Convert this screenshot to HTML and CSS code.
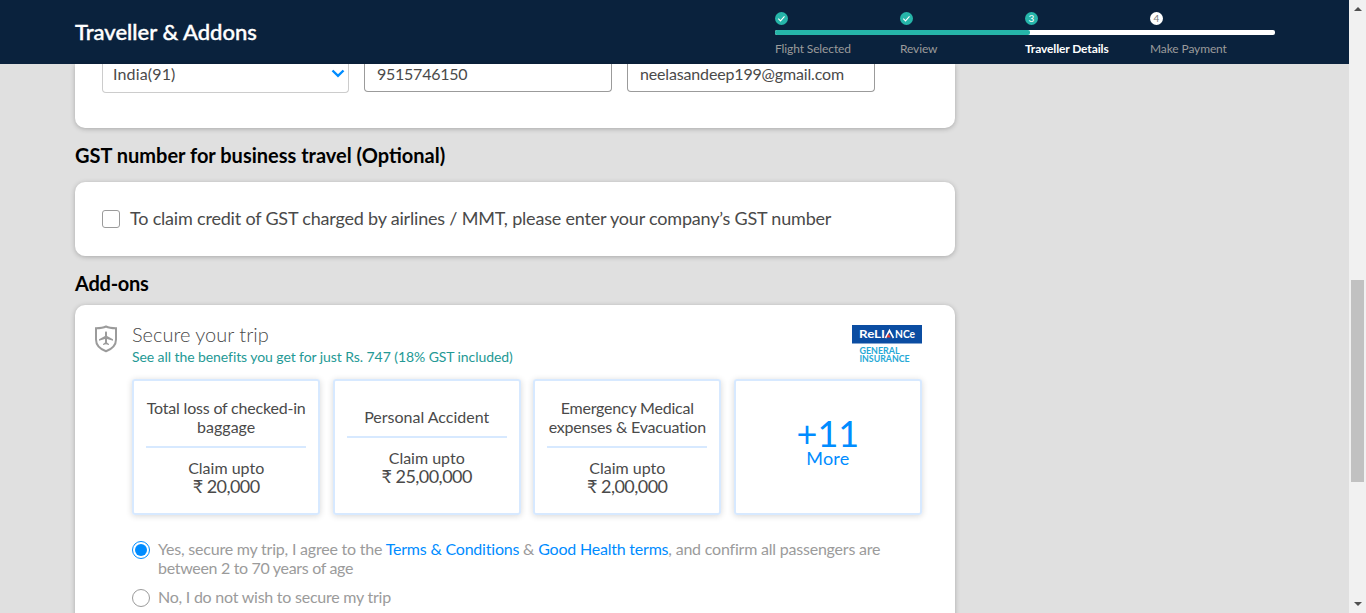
FILE: index.html
```html
<!DOCTYPE html>
<html lang="en">
<head>
<meta charset="utf-8">
<title>Traveller &amp; Addons</title>
<link rel="stylesheet" href="styles.css">
</head>
<body>
<div class="page">
  <header class="header">
    <h1 class="title"><span>Traveller &amp; Addons</span></h1>
    <div class="progress">
      <div class="dots">
        <span class="dot"><svg width="13" height="13" viewBox="0 0 13 13"><path d="M3.3 6.7l2.2 2.2 4-4.5"/></svg></span>
        <span class="dot"><svg width="13" height="13" viewBox="0 0 13 13"><path d="M3.3 6.7l2.2 2.2 4-4.5"/></svg></span>
        <span class="dot">3</span>
        <span class="dot pending">4</span>
      </div>
      <div class="track"><div class="fill"></div></div>
      <div class="steps"><span>Flight Selected</span><span>Review</span><span class="current">Traveller Details</span><span>Make Payment</span></div>
    </div>
  </header>
  <main class="content">
    <section class="card contact">
      <div class="field select"><span class="country">India(91)</span><svg width="14" height="9" viewBox="0 0 14 9"><path d="M1.5 1.5L7 6.8l5.5-5.3"/></svg></div>
      <div class="field"><span class="phone">9515746150</span></div>
      <div class="field"><span class="email">neelasandeep199@gmail.com</span></div>
    </section>
    <h2 class="heading gst-heading"><span>GST number for business travel (Optional)</span></h2>
    <section class="card gst"><span class="checkbox"></span><span class="gst-text">To claim credit of GST charged by airlines / MMT, please enter your company’s GST number</span></section>
    <h2 class="heading addon-heading"><span>Add-ons</span></h2>
    <section class="card addons">
      <div class="secure">
        <svg class="shield" width="24" height="28" viewBox="0 0 24 28"><path class="outline" d="M12 1.500C9 3 5.500 3.200 2 3.200V14.500C2 20.500 6 24 12 26.300 18 24 22 20.500 22 14.500V3.200C18.500 3.200 15 3 12 1.500Z"/><path class="plane" d="M11 7.500Q12 5.200 13 7.500V11L19 14.200V15.800L13 14V17.500L15 19V20L12 19.300 9 20V19L11 17.500V14L5 15.800V14.200L11 11Z"/></svg>
        <div class="secure-copy"><div class="secure-title"><span>Secure your trip</span></div><div class="benefits"><span>See all the benefits you get for just Rs. 747 (18% GST included)</span></div></div>
        <svg class="logo" width="70" height="38" viewBox="0 0 70 38"><rect width="70" height="18.500" fill="#0b4da2"/><g class="brand"><text x="7" y="13" textLength="26" lengthAdjust="spacingAndGlyphs">ReLI</text><path d="M33.500 13L37.500 5.500 41.500 13"/><text x="43" y="13" textLength="20" lengthAdjust="spacingAndGlyphs">NCe</text></g><path d="M34.500 12.500l2-4 2.200 4z" fill="#ed3b32"/><g class="brand-sub"><text x="7.500" y="28.500" textLength="40" lengthAdjust="spacingAndGlyphs">GENERAL</text><text x="7.500" y="37.300" textLength="50" lengthAdjust="spacingAndGlyphs">INSURANCE</text></g></svg>
      </div>
      <div class="benefit-grid">
        <div class="benefit"><div class="name"><span class="tight">Total loss of checked-in</span><br><span>baggage</span></div><div class="claim">Claim upto</div><div class="amount">₹ 20,000</div></div>
        <div class="benefit"><div class="name"><span>Personal Accident</span></div><div class="claim">Claim upto</div><div class="amount">₹ 25,00,000</div></div>
        <div class="benefit"><div class="name"><span class="tight">Emergency Medical</span><br><span class="tight">expenses &amp; Evacuation</span></div><div class="claim">Claim upto</div><div class="amount">₹ 2,00,000</div></div>
        <div class="benefit more"><div class="count">+11</div><div class="more-label">More</div></div>
      </div>
      <div class="choice"><span class="radio selected"></span><p><span class="terms">Yes, secure my trip, I agree to the <a>Terms &amp; Conditions</a> &amp; <a>Good Health terms</a>, and confirm all passengers are</span><br><span class="years">between 2 to 70 years of age</span></p></div>
      <div class="choice"><span class="radio"></span><p><span class="no">No, I do not wish to secure my trip</span></p></div>
    </section>
  </main>
</div>
<aside class="scrollbar"><span class="arrow up"></span><span class="thumb"></span><span class="arrow down"></span></aside>
</body>
</html>
```
FILE: styles.css
```css
* { box-sizing: border-box; }
body { margin: 0; width: 1366px; height: 613px; overflow: hidden; display: flex; background: #e0e0e0; font-family: Lato, sans-serif; color: #4a4a4a; white-space: nowrap; }
.page { width: 1349px; height: 613px; overflow: hidden; }
.header { height: 64px; background: #0a223d; padding: 0 74px 0 75px; display: flex; justify-content: space-between; }
.title { margin: 0; color: #fff; font-size: 22px; font-weight: 500; line-height: 64px; -webkit-text-stroke: .4px #fff; }
.progress { width: 500px; padding-top: 12px; }
.dots, .steps { display: grid; grid-template-columns: repeat(4, 125px); }
.dot { width: 13px; height: 13px; border-radius: 50%; background: #26b5a9; color: #fff; font-size: 10px; line-height: 13px; text-align: center; }
.dot svg { display: block; fill: none; stroke: #fff; stroke-width: 1.1; }
.dot.pending { background: #fff; color: #777; }
.track { height: 5px; margin-top: 5px; background: #fff; border-radius: 2px; overflow: hidden; }
.fill { width: 255px; height: 5px; background: #26b5a9; border-radius: 0 2px 2px 0; }
.steps { margin-top: 6px; font-size: 12px; line-height: 16px; letter-spacing: -.12px; color: #9b9b9b; }
.current { color: #fff; font-weight: 700; }
.content { padding-left: 75px; width: 955px; }
.card { background: #fff; border-radius: 10px; box-shadow: 0 1px 5px rgba(0,0,0,.25); }
.contact { height: 64px; border-radius: 0 0 10px 10px; padding-left: 27px; display: flex; gap: 15px; align-items: flex-start; }
.field { width: 248px; height: 28px; border: 1px solid #9b9b9b; border-top: 0; border-radius: 0 0 4px 4px; padding: 0 12px; font-size: 16px; line-height: 20px; }
.email { letter-spacing: -.16px; }
.phone { letter-spacing: -.25px; }
.country { letter-spacing: .15px; }
.select { width: 247px; height: 29px; border-color: #ccc; padding: 0 3px 0 10px; display: flex; justify-content: space-between; }
.select svg { margin-top: 5px; fill: none; stroke: #008cff; stroke-width: 2.4; }
.heading { margin: 0; color: #000; font-size: 20px; font-weight: 700; }
.gst-heading { height: 54px; line-height: 54px; }
.gst { height: 74px; padding-left: 27px; display: flex; align-items: center; gap: 10px; font-size: 18px; }
.gst-text { letter-spacing: -.195px; padding-bottom: 2px; }
.checkbox { width: 18px; height: 18px; border: 1px solid #9b9b9b; border-radius: 3px; }
.addon-heading { height: 49px; line-height: 54px; letter-spacing: -.25px; }
.addons { height: 340px; padding: 19px 33px 0 19px; }
.secure { height: 55px; display: flex; }
.shield { margin-top: 1px; }
.shield .outline { fill: none; stroke: #9b9b9b; stroke-width: 2; }
.shield .plane { fill: #9b9b9b; }
.secure-copy { margin-left: 14px; flex: 1; }
.secure-title { font-size: 20px; font-weight: 300; line-height: 21px; }
.benefits { font-size: 14px; line-height: 24px; letter-spacing: -.075px; color: #249995; }
.logo { margin-top: 1px; }
.brand { fill: #fff; font: bold 11px Lato, sans-serif; }
.brand path { fill: none; stroke: #fff; stroke-width: 1.6; }
.brand-sub { fill: #25a9d6; font: bold 8.5px Lato, sans-serif; }
.benefit-grid { margin-left: 38px; display: grid; grid-template-columns: repeat(4, minmax(0, 1fr)); gap: 12.2px; }
.benefit { height: 135.5px; padding: 0 12px 1.5px; border: 2px solid #d7e9ff; border-radius: 3px; box-shadow: 0 1px 6px rgba(0,0,0,.16); display: flex; flex-direction: column; justify-content: center; text-align: center; }
.name { padding-bottom: 10px; border-bottom: 2px solid #d7e9ff; margin-bottom: 11px; font-size: 16px; line-height: 19px; }
.tight { letter-spacing: -.2px; }
.claim { font-size: 16px; line-height: 18px; }
.amount { font-size: 18px; line-height: 18px; letter-spacing: -.55px; }
.more { color: #008cff; }
.count { font-size: 36px; line-height: 36px; margin-top: -10px; }
.more-label { font-size: 18px; line-height: 18px; letter-spacing: .2px; margin-top: -2px; }
.choice { margin-left: 38px; margin-top: 25.5px; display: flex; gap: 8px; font-size: 16px; line-height: 19px; color: #9b9b9b; }
.choice + .choice { margin-top: 11px; }
.choice p { margin: -1px 0 0; }
.choice a { color: #008cff; }
.terms { letter-spacing: -.21px; }
.no { letter-spacing: -.24px; }
.years { letter-spacing: -.32px; }
.radio { width: 18px; height: 18px; margin-top: 1px; border: 1px solid #9b9b9b; border-radius: 50%; }
.radio.selected { border-color: #008cff; background: #008cff; background-clip: content-box; padding: 2px; }
.scrollbar { width: 17px; height: 613px; background: #f1f1f1; display: flex; flex-direction: column; align-items: center; }
.arrow { border: 4px solid transparent; }
.up { border-top: 0; border-bottom-color: #505050; margin-top: 7px; }
.thumb { width: 13px; height: 202px; margin-top: 269px; background: #c1c1c1; }
.down { border-bottom: 0; border-top-color: #505050; margin-top: 120px; }
```
